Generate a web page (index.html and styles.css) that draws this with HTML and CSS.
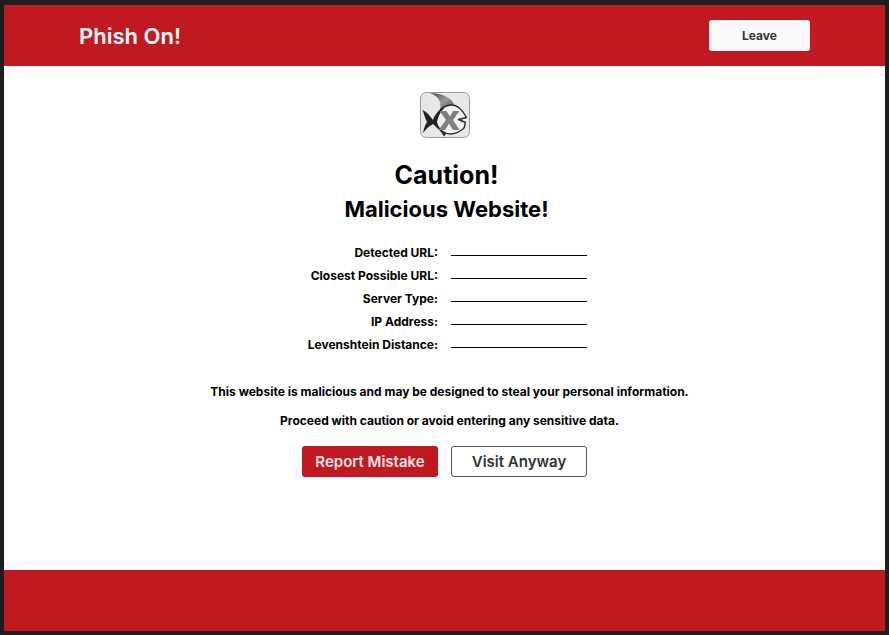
FILE: index.html
```html
<!DOCTYPE html>
<html lang="en">
<head>
<meta charset="utf-8">
<meta name="viewport" content="width=device-width, initial-scale=1">
<title>Phish On!</title>
<link rel="stylesheet" href="styles.css">
</head>
<body>
<header class="topbar">
  <span class="brand">Phish On!</span>
  <button class="btn btn-leave" type="button">Leave</button>
</header>
<main class="warning">
  <svg class="logo" viewBox="0 0 50 46" role="img" aria-label="Fish logo">
    <defs>
      <linearGradient id="fin" x1="0" y1="0" x2="1" y2="1">
        <stop offset="0" stop-color="#444"/>
        <stop offset="0.5" stop-color="#999"/>
        <stop offset="1" stop-color="#555"/>
      </linearGradient>
    </defs>
    <rect x="0.5" y="0.5" width="49" height="45" rx="6" fill="#e8e8e8" stroke="#9a9a9a"/>
    <path d="M10 1C19 1 27 4 31 8C33 10 34 12 34.500 14C29 12 24 14 20 18C22 9 18 4 10 1Z" fill="url(#fin)"/>
    <path d="M14 29C18 18 25 13 32 13C39 13 43 19 46.500 25.500L38.500 27.500L45.500 30.500C44 33 46 35 43 37C40 39 37 42 31 42C23 42 18 37 14 29Z" fill="#f0f0f0" stroke="#292929" stroke-width="1.400" stroke-linejoin="round"/>
    <path d="M2.500 18C7 20 10 24 13 28C15 22 19 18 25 15.500C20 20 18 25 17 30C18 35 21 39 26 42L24 44.500C22 40 17 36 13 32C9 34 6 37 3 41C4 36 5 33 7 30C5 26 4 22 2.500 18Z" fill="#222"/>
    <path d="M19.500 19H26.500L30 24.500L33 19H39.500L33 28L39.500 38H33L29 31.500L25 38H18.500L26 28Z" fill="#808080"/>
  </svg>
  <div class="headings">
    <h1>Caution!</h1>
    <h2>Malicious Website!</h2>
  </div>
  <form class="details">
    <label for="detected">Detected URL:</label><input id="detected" type="text" readonly>
    <label for="closest">Closest Possible URL:</label><input id="closest" type="text" readonly>
    <label for="server">Server Type:</label><input id="server" type="text" readonly>
    <label for="ip">IP Address:</label><input id="ip" type="text" readonly>
    <label for="distance">Levenshtein Distance:</label><input id="distance" type="text" readonly>
  </form>
  <div class="message">
    <p>This website is malicious and may be designed to steal your personal information.</p>
    <p>Proceed with caution or avoid entering any sensitive data.</p>
  </div>
  <div class="actions">
    <button class="btn btn-report" type="button">Report Mistake</button>
    <button class="btn btn-visit" type="button">Visit Anyway</button>
  </div>
</main>
<footer class="bottombar"></footer>
</body>
</html>
```
FILE: styles.css
```css
* {
  box-sizing: border-box;
}

body {
  margin: 0;
  min-height: 100vh;
  display: flex;
  flex-direction: column;
  border: 4px solid #1e1e1e;
  border-top-width: 5px;
  background: #fff;
  color: #000;
  font-family: Inter, "Liberation Sans", sans-serif;
  font-size: 12px;
  font-weight: 700;
}

h1,
h2,
p {
  margin: 0;
}

.topbar {
  display: flex;
  align-items: center;
  justify-content: space-between;
  min-height: 61px;
  padding: 0 75px;
  background: #c01a20;
}

.brand {
  color: #fff;
  font-size: 22px;
  font-weight: 600;
  line-height: 28px;
}

.btn {
  height: 31px;
  padding: 0;
  border: 0;
  border-radius: 3px;
  font: inherit;
  font-size: 15px;
  font-weight: 600;
  cursor: pointer;
}

.btn-leave {
  width: 101px;
  background: #f9f9f9;
  color: #333;
  font-size: 12px;
  font-weight: 700;
}

.warning {
  flex: 1;
  display: flex;
  flex-direction: column;
  align-items: center;
  padding: 26px 16px;
}

.logo {
  width: 50px;
  height: 46px;
}

.headings {
  padding-left: 4px;
  margin-top: 20px;
  text-align: center;
}

h1 {
  font-size: 25px;
  font-weight: 700;
  line-height: 34px;
}

h2 {
  font-size: 22px;
  font-weight: 700;
  line-height: 34px;
}

.details,
.actions {
  display: grid;
  grid-template-columns: 136px 136px;
  column-gap: 13px;
}

.details {
  margin-top: 15px;
  line-height: 23px;
}

.details label {
  text-align: right;
  white-space: nowrap;
}

.details input {
  width: 100%;
  height: 15px;
  padding: 0;
  border: 0;
  border-bottom: 1px solid #000;
  background: transparent;
  font: inherit;
}

.message {
  padding-left: 10px;
  margin-top: 21px;
  text-align: center;
  line-height: 29px;
}

.actions {
  margin-top: 11px;
}

.btn-report {
  background: #c01a20;
  color: #f9e9ea;
}

.btn-visit {
  border: 1px solid #555;
  background: #fff;
  color: #333;
}

.bottombar {
  min-height: 61px;
  background: #c01a20;
}
```
